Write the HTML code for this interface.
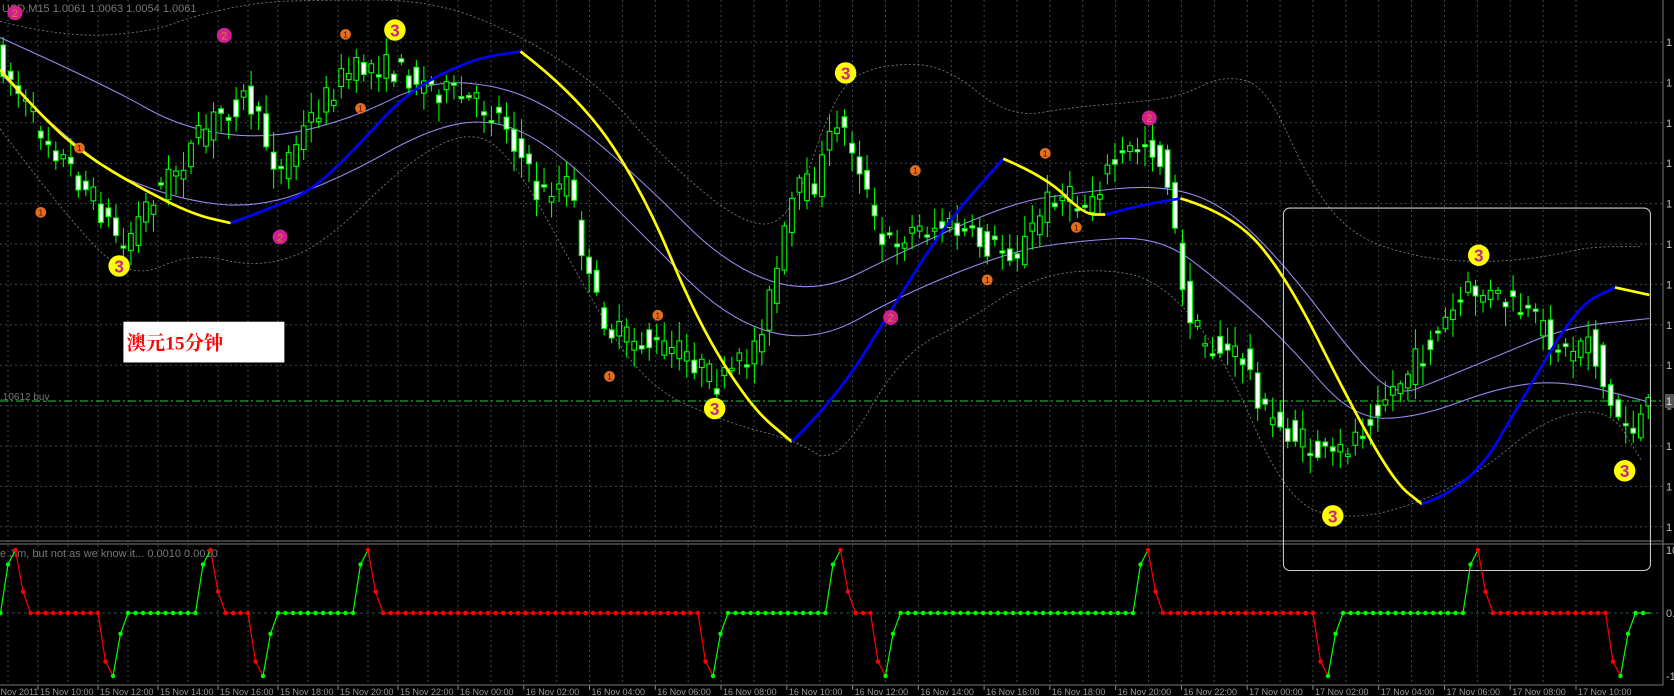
<!DOCTYPE html>
<html><head><meta charset="utf-8"><style>
html,body{margin:0;padding:0;background:#000;width:1674px;height:696px;overflow:hidden}
svg{display:block}
text{font-family:"Liberation Sans",sans-serif}
</style></head><body>
<svg id="s" width="1674" height="696" viewBox="0 0 1674 696" xmlns="http://www.w3.org/2000/svg">
<rect width="1674" height="696" fill="#000"/>
<g id="grid"></g>
<g transform="scale(1.0731,1.0724)" id="main"></g>
<g id="ov"></g>
</svg>
<script>
var grid=document.getElementById('grid'),main=document.getElementById('main'),ov=document.getElementById('ov');
var H='';
for(var y=42;y<540;y+=40.4){H+='<line x1="0" y1="'+y+'" x2="1663" y2="'+y+'" stroke="#3a4a4a" stroke-dasharray="2,3"/>';
H+='<text x="1666" y="'+(y+4)+'" font-size="11" fill="#bbb">1</text>';}
var xs=[];
var names=["15 Nov 10:00","15 Nov 12:00","15 Nov 14:00","15 Nov 16:00","15 Nov 18:00","15 Nov 20:00","15 Nov 22:00","16 Nov 00:00","16 Nov 02:00","16 Nov 04:00","16 Nov 06:00","16 Nov 08:00","16 Nov 10:00","16 Nov 12:00","16 Nov 14:00","16 Nov 16:00","16 Nov 18:00","16 Nov 20:00","16 Nov 22:00","17 Nov 00:00","17 Nov 02:00","17 Nov 04:00","17 Nov 06:00","17 Nov 08:00","17 Nov 10:00"];
for(var i=0;i<names.length;i++){var x=i<=7?38+60*i:458+(1576-458)/17*(i-7);xs.push(x);}
for(var i=0;i<xs.length;i++){var x=xs[i];var nx=i<xs.length-1?(x+xs[i+1])/2:null;
H+='<line x1="'+x+'" y1="0" x2="'+x+'" y2="685" stroke="#3a4a4a" stroke-dasharray="2,3"/>';
if(nx)H+='<line x1="'+nx+'" y1="0" x2="'+nx+'" y2="685" stroke="#3a4a4a" stroke-dasharray="2,3"/>';
H+='<line x1="'+x+'" y1="685" x2="'+x+'" y2="690" stroke="#888"/>';
H+='<text x="'+(x+2)+'" y="695" font-size="9" fill="#999">'+names[i]+'</text>';}
H+='<line x1="8" y1="0" x2="8" y2="685" stroke="#3a4a4a" stroke-dasharray="2,3"/>';
H+='<text x="-12" y="695" font-size="9" fill="#999">15 Nov 2011</text>';
H+='<line x1="0" y1="541" x2="1663" y2="541" stroke="#777"/><line x1="0" y1="544" x2="1674" y2="544" stroke="#777"/>';
H+='<line x1="1663" y1="0" x2="1663" y2="685" stroke="#777"/><line x1="0" y1="685" x2="1663" y2="685" stroke="#777"/>';
H+='<line x1="0" y1="613" x2="1663" y2="613" stroke="#2f5050" stroke-dasharray="3,3"/>';
H+='<text x="1666" y="554" font-size="11" fill="#bbb">10</text><text x="1666" y="617" font-size="11" fill="#bbb">0.</text><text x="1666" y="680" font-size="11" fill="#bbb">-1</text>';
H+='<line x1="0" y1="401" x2="1663" y2="401" stroke="#2ecc2e" stroke-dasharray="8,3,2,3"/>';
H+='<rect x="1665" y="394" width="9" height="14" fill="#555"/><text x="1666" y="405" font-size="11" fill="#ddd">1</text>';
H+='<text x="0" y="400" font-size="10" fill="#777">.10612 buy</text>';
H+='<text x="2" y="12" font-size="11" fill="#777">USD,M15  1.0061 1.0063 1.0054 1.0061</text>';
H+='<text x="0" y="557" font-size="11" fill="#777">e Jim, but not as we know it...  0.0010 0.0010</text>';
grid.innerHTML=H;

function interp(pts,x){if(x<=pts[0][0])return pts[0][1];for(var i=1;i<pts.length;i++){if(x<=pts[i][0]){var a=pts[i-1],b=pts[i];return a[1]+(b[1]-a[1])*(x-a[0])/(b[0]-a[0]);}}return pts[pts.length-1][1];}
function path(pts){var d='M'+pts[0][0]+','+pts[0][1];for(var i=1;i<pts.length-1;i++){var mx=(pts[i][0]+pts[i+1][0])/2,my=(pts[i][1]+pts[i+1][1])/2;d+=' Q'+pts[i][0]+','+pts[i][1]+' '+mx+','+my;}var l=pts[pts.length-1];d+=' L'+l[0]+','+l[1];return d;}
var M='';
var up=[[0,20],[60,35],[140,30],[180,15],[240,2],[300,0],[400,0],[480,30],[560,80],[620,150],[700,215],[740,200],[780,80],[820,60],[880,60],[940,110],[1000,100],[1060,95],[1100,90],[1140,70],[1180,80],[1220,170],[1260,220],[1320,240],[1380,245],[1440,240],[1480,230],[1530,230]];
var lo=[[0,120],[60,200],[120,262],[180,235],[240,250],[300,230],[380,150],[440,120],[480,150],[540,260],[600,360],[680,395],[740,410],[780,435],[840,330],[900,300],[960,260],[1020,250],[1080,260],[1140,330],[1200,470],[1260,485],[1320,470],[1380,440],[1440,390],[1500,380],[1530,430]];
M+='<path d="'+path(up)+'" fill="none" stroke="#777" stroke-dasharray="2,2" stroke-width="0.8"/>';
M+='<path d="'+path(lo)+'" fill="none" stroke="#777" stroke-dasharray="2,2" stroke-width="0.8"/>';
var p1=[[0,35],[100,80],[170,120],[250,130],[330,110],[400,75],[470,80],[530,110],[600,170],[680,250],[760,275],[840,235],[940,190],[1000,180],[1080,172],[1140,190],[1200,250],[1260,330],[1300,370],[1340,355],[1400,330],[1460,305],[1537,297]];
var p2=[[0,68],[80,150],[160,185],[240,195],[320,165],[400,120],[460,110],[520,140],[600,220],[680,300],[760,320],[840,275],[940,235],[1000,225],[1080,220],[1140,265],[1200,320],[1260,390],[1320,390],[1400,360],[1460,355],[1537,375]];
M+='<path d="'+path(p1)+'" fill="none" stroke="#9a88ee" stroke-width="1"/>';
M+='<path d="'+path(p2)+'" fill="none" stroke="#9a88ee" stroke-width="1"/>';
var pr=[[0,55],[30,110],[60,150],[90,190],[115,230],[140,185],[170,150],[200,110],[230,90],[260,160],[290,110],[320,70],[350,60],[380,70],[400,80],[440,95],[470,110],[500,180],[530,170],[550,270],[570,310],[600,320],[640,330],[670,360],[700,330],[720,270],[740,180],[760,170],[780,110],[800,150],[820,230],[850,215],[880,210],[920,230],[950,235],[980,180],[1010,190],[1040,150],[1070,130],[1090,170],[1100,270],[1120,320],[1160,335],[1180,390],[1210,410],[1240,430],[1260,410],[1280,380],[1310,350],[1340,310],[1370,270],[1400,280],[1430,300],[1460,330],[1480,310],[1500,380],[1520,400],[1537,380]];
var seed=7;function rnd(){seed=(seed*16807)%2147483647;return seed/2147483647;}
for(var i=0;i<220;i++){var x=7*i+3;var o=interp(pr,x-7)+(rnd()-0.5)*26,c=interp(pr,x)+(rnd()-0.5)*26;
if(Math.abs(o-c)<2)c=o+2;var t=Math.min(o,c)-3-rnd()*16,b=Math.max(o,c)+3+rnd()*16;
M+='<line x1="'+x+'" y1="'+t+'" x2="'+x+'" y2="'+b+'" stroke="#00ff00" stroke-width="1"/>';
var bull=c<o;M+='<rect x="'+(x-2.2)+'" y="'+Math.min(o,c)+'" width="4.4" height="'+Math.abs(o-c)+'" fill="'+(bull?'#000':'#fff')+'" stroke="#00ff00" stroke-width="1"/>';}
var segs=[['#ffff00',[[0,65],[40,110],[80,145],[130,175],[180,200],[215,208]]],['#0000ff',[[215,208],[250,195],[290,178],[330,140],[380,85],[440,55],[485,48]]],['#ffff00',[[485,48],[540,90],[600,180],[650,300],[700,380],[738,412]]],['#0000ff',[[738,412],[780,370],[830,290],[880,210],[935,148]]],['#ffff00',[[935,148],[975,165],[1010,200],[1030,200]]],['#0000ff',[[1030,200],[1060,192],[1100,185]]],['#ffff00',[[1100,185],[1150,200],[1200,260],[1260,380],[1300,450],[1325,470]]],['#0000ff',[[1325,470],[1370,455],[1420,370],[1470,285],[1505,268]]],['#ffff00',[[1505,268],[1537,275]]]];
segs.forEach(function(s){M+='<path d="'+path(s[1])+'" fill="none" stroke="'+s[0]+'" stroke-width="2.5"/>';});
[[111,248],[368,28],[788,68],[666,381],[1378,238],[1242,481],[1514,439]].forEach(function(p){M+='<circle cx="'+p[0]+'" cy="'+p[1]+'" r="10" fill="#ffff00"/><text x="'+p[0]+'" y="'+(p[1]+6)+'" font-size="16" font-weight="bold" text-anchor="middle" fill="#cc2288">3</text>';});
[[38,198],[74,138],[322,32],[336,101],[568,351],[613,294],[853,159],[920,261],[974,143],[1003,212]].forEach(function(p){M+='<circle cx="'+p[0]+'" cy="'+p[1]+'" r="5" fill="#e07020"/><text x="'+p[0]+'" y="'+(p[1]+3)+'" font-size="8" text-anchor="middle" fill="#600">1</text>';});
[[14,12],[209,33],[261,221],[830,296],[1071,110]].forEach(function(p){M+='<circle cx="'+p[0]+'" cy="'+p[1]+'" r="7" fill="#d02090"/><text x="'+p[0]+'" y="'+(p[1]+4)+'" font-size="10" text-anchor="middle" fill="#e08020">2</text>';});
M+='<rect x="1196" y="194" width="342" height="338" rx="6" fill="none" stroke="#ccc" stroke-width="1"/>';
M+='<rect x="115" y="300" width="150" height="38" fill="#fff"/><text x="118" y="326" font-size="18" font-weight="bold" fill="#ff0000" style="font-family:\'Liberation Serif\',\'Noto Serif CJK SC\',serif">澳元15分钟</text>';
main.innerHTML=M;
var n=221,v=[];for(var i=0;i<n;i++)v.push(0);
var peaks=[2,28,49,112,153,197],troughs=[15,35,95,118,177,216];
peaks.forEach(function(p){if(p-1>=0)v[p-1]=7.7;v[p]=10;v[p+1]=3.4;});
troughs.forEach(function(t){v[t-1]=-7.7;v[t]=-10;v[t+1]=-3.3;});
var ev=[];peaks.forEach(function(p){ev.push([p,'r'])});troughs.forEach(function(t){ev.push([t,'g'])});ev.sort(function(a,b){return a[0]-b[0]});
var s='g',I='';
function X(i){return 7.5*i+0.5;}function Y(val){return 613-val*6.3;}
for(var i=0;i<n-1;i++){for(var k=0;k<ev.length;k++)if(ev[k][0]==i)s=ev[k][1];
var col=s=='g'?'#00ff00':'#ff0000';
I+='<line x1="'+X(i)+'" y1="'+Y(v[i])+'" x2="'+X(i+1)+'" y2="'+Y(v[i+1])+'" stroke="'+col+'" stroke-width="1.2"/>';
I+='<circle cx="'+X(i)+'" cy="'+Y(v[i])+'" r="2.2" fill="'+col+'"/>';}
ov.innerHTML=I;
</script>
</body></html>
